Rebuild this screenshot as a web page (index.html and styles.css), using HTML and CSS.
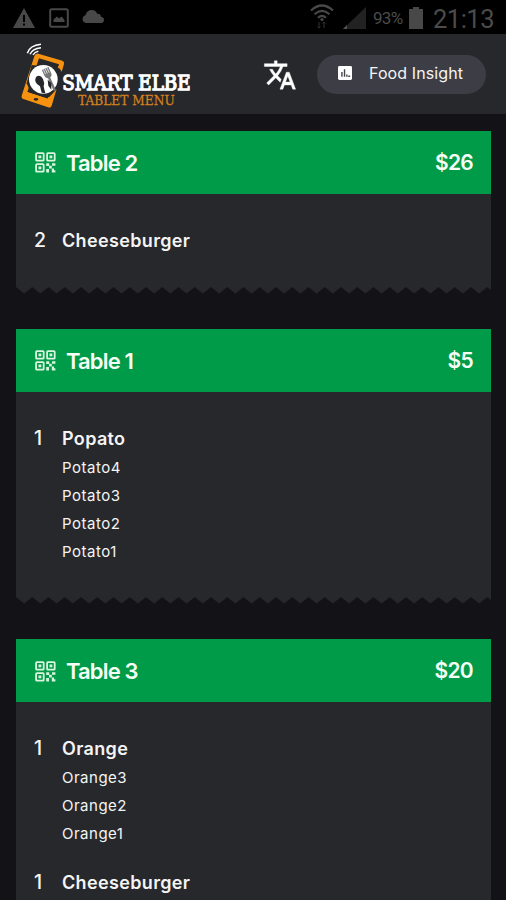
FILE: index.html
```html
<!DOCTYPE html>
<html lang="en">
<head>
<meta charset="utf-8">
<title>Smart Elbe Tablet Menu</title>
<link rel="stylesheet" href="styles.css">
</head>
<body>
<svg class="defs" width="0" height="0">
  <symbol id="qr" viewBox="0 0 21 21">
    <g fill="none" stroke="currentColor" stroke-width="1.8"><rect x="1.1" y="1.1" width="7.6" height="7.6" rx=".8"/><rect x="12.1" y="1.1" width="7.6" height="7.6" rx=".8"/><rect x="1.1" y="12.1" width="7.6" height="7.6" rx=".8"/></g>
    <path fill="currentColor" d="M3.500 3.500h2.800v2.800H3.500zM14.500 3.500h2.800v2.800h-2.800zM3.500 14.500h2.800v2.800H3.500zM11.200 11.200h3v2.600h2.600v2.800h-2.800v-2.600h-2.800zM17 11.200h3.400v2.600H17zM11.200 17h2.800v3.400h-2.800zM16.800 16.400h2.200v1.800h1.400v2.200h-3.600z"/>
  </symbol>
</svg>
<div class="status">
  <div class="status-left">
    <svg width="22" height="20" viewBox="0 0 22 20"><path fill="#484848" fill-rule="evenodd" d="M11 0 22 20H0zM10 7v7h2V7zm0 8.500v2h2v-2z"/></svg>
    <svg width="20" height="20" viewBox="0 0 20 20"><rect x="1.200" y="1.200" width="17.600" height="17.600" rx="1.500" fill="none" stroke="#484848" stroke-width="2"/><path fill="#484848" d="M4.500 14v-2.500L8 8.500l2 2 2.500-2 3 3.500v2z"/></svg>
    <svg width="22" height="13" viewBox="0 0 22 13"><path fill="#484848" d="M4 13a4 4 0 0 1-.5-7.800C4.500 1.500 7 0 9.500 0c3 0 5 1.500 5.700 3.800C18 3.500 19 5.500 19 6.700c2 .3 3 1.600 3 3.200C22 12 20.500 13 19 13z"/></svg>
  </div>
  <div class="status-right">
    <svg width="24" height="25" viewBox="0 0 24 25"><g fill="none" stroke="#484848" stroke-width="2.200"><path d="M1 6.500Q12-3.500 23 6.500M4.500 10.200Q12 3.500 19.500 10.200M8 13.700Q12 10 16 13.700"/></g><circle cx="12" cy="15.500" r="1.600" fill="#484848"/><path d="M9 18v6M7.500 22.500 9 24l1.500-1.500M14 24v-6m-1.500 1.500L14 18l1.500 1.500" fill="none" stroke="#333"/></svg>
    <svg class="signal" width="23" height="22" viewBox="0 0 23 22"><path d="M23 0v22H0z" fill="#222"/><path d="M4 18v4H0z" fill="#555"/></svg>
    <span class="percent">93%</span>
    <svg class="battery" width="14" height="22" viewBox="0 0 14 22"><path d="M4 0h6v2h4v20H0V2h4z" fill="#484848"/></svg>
    <span class="clock">21:13</span>
  </div>
</div>
<header class="appbar">
  <svg class="logo" width="174" height="68" viewBox="60 126 522 204">
    <path fill="#f6920f" fill-rule="evenodd" d="M115 161 187 182Q194 185 192 192L155 317Q152 325 144 322L70 297Q63 294 65 287L103 169Q107 159 115 161zM117 175 177 193 143 296 82 276z"/>
    <path d="m77 275 69 22-5 15-69-23z" fill="#f6920f"/>
    <ellipse cx="108" cy="298" rx="7" ry="4" fill="#27282c"/>
    <path d="M95 195 80 250 93 278 147 292 176 262 190 222 178 205z" fill="#27282c"/>
    <circle cx="130" cy="238" r="43" fill="#fff"/>
    <g transform="rotate(-24 130 240)"><path d="M138 211h22v19q0 9-8 11v42h-7v-42q-7-2-7-11z" fill="#777"/><path d="M143 211v16M149 211v16M155 211v16" stroke="#fff" stroke-width="2"/></g>
    <path d="M108 231q12-10 21 6 6 12 2 23l5 20-11-2-5-19q-20-11-12-28z" fill="#26272a"/>
    <path d="m143 239 11 10 0 20-9-12z" fill="#26272a"/>
    <path d="M82 160q7-24 41-27M90 163q7-17 33-20M99 165q5-9 16-11" fill="none" stroke="#fff" stroke-width="4.500"/>
    <text class="logo-name" x="187" y="271" textLength="385" lengthAdjust="spacingAndGlyphs">SMART ELBE</text>
    <text class="logo-sub" x="234" y="314" textLength="290" lengthAdjust="spacingAndGlyphs">TABLET MENU</text>
  </svg>
  <svg class="translate" width="34" height="34" viewBox="0 0 24 24"><path fill="#fff" d="M12.870 15.070l-2.540-2.510.030-.030A17.520 17.520 0 0 0 14.070 6H17V4h-7V2H8v2H1v1.990h11.170C11.500 7.920 10.440 9.750 9 11.350 8.070 10.320 7.300 9.190 6.690 8h-2c.730 1.630 1.730 3.170 2.980 4.560l-5.090 5.020L4 19l5-5 3.110 3.110.760-2.040zM18.500 10h-2L12 22h2l1.120-3h4.750L21 22h2l-4.500-12zm-2.620 7l1.620-4.330L19.120 17h-3.240z" stroke="#fff" stroke-width=".3"/></svg>
  <div class="insight">
    <svg width="14" height="14" viewBox="0 0 15 15"><rect width="15" height="15" rx="1.500" fill="#fff"/><path d="M4.200 11.500v-5M7 11.500v-8M9.500 11.500V9M11 11h2" stroke="#44454c" stroke-width="1.500"/></svg>
    <span>Food Insight</span>
  </div>
</header>
<main>
  <section class="ticket">
    <div class="head"><svg class="qr"><use href="#qr"/></svg><h2>Table 2</h2><b class="price">$26</b></div>
    <div class="body">
      <div class="item"><span class="qty">2</span><div><h3>Cheeseburger</h3></div></div>
    </div>
    <svg class="zigzag" width="475" height="7"><defs><pattern id="teeth" width="16.250" height="7" patternUnits="userSpaceOnUse"><path d="M0 0h16.250L8.125 6.500z" fill="#27282c"/></pattern></defs><rect width="475" height="7" fill="url(#teeth)"/></svg>
  </section>
  <section class="ticket">
    <div class="head"><svg class="qr"><use href="#qr"/></svg><h2>Table 1</h2><b class="price">$5</b></div>
    <div class="body">
      <div class="item"><span class="qty">1</span><div><h3>Popato</h3><p>Potato4</p><p>Potato3</p><p>Potato2</p><p>Potato1</p></div></div>
    </div>
    <svg class="zigzag" width="475" height="7"><rect width="475" height="7" fill="url(#teeth)"/></svg>
  </section>
  <section class="ticket">
    <div class="head"><svg class="qr"><use href="#qr"/></svg><h2>Table 3</h2><b class="price">$20</b></div>
    <div class="body">
      <div class="item"><span class="qty">1</span><div><h3>Orange</h3><p>Orange3</p><p>Orange2</p><p>Orange1</p></div></div>
      <div class="item"><span class="qty">1</span><div><h3>Cheeseburger</h3></div></div>
    </div>
  </section>
</main>
</body>
</html>
```
FILE: styles.css
```css
* { box-sizing: border-box; }
html, body { height: 900px; overflow: hidden; }
body { margin: 0; background: #131217; color: #f4f4f4; font-family: Inter, "Liberation Sans", sans-serif; }
h2, h3, p { margin: 0; }
svg { display: block; flex: none; }
.defs { position: absolute; }
.status { height: 34px; background: #000; display: flex; justify-content: space-between; padding: 0 11px 0 13px; color: #4b4b4b; font-family: Roboto, sans-serif; }
.status-left { display: flex; gap: 14px; padding-top: 8px; }
.status-left svg:last-child { margin: 2px 0 0 -1px; }
.status-right { display: flex; padding-top: 4px; }
.status-right svg:first-child { margin-left: -2px; }
.signal { margin: 3px 0 0 9px; }
.percent { font-size: 17px; line-height: 28px; letter-spacing: -.7px; width: 34px; margin-left: 7px; }
.battery { margin: 3px 0 0 2px; }
.clock { font-size: 25.500px; line-height: 30px; margin-left: 10px; width: 62px; letter-spacing: -.5px; }
.appbar { height: 80px; background: #27282c; display: flex; align-items: flex-start; padding: 8px 20px; }
.logo { overflow: visible; }
.logo-name { font: 62px "DejaVu Serif", serif; fill: #fff; stroke: #fff; stroke-width: 4px; }
.logo-sub { font: 40px "DejaVu Serif", serif; fill: #d3801f; stroke: #d3801f; stroke-width: .8px; }
.translate { margin: 16px 2px 0 69px; }
.insight { width: 169px; height: 39px; margin: 13px 0 0 18px; border-radius: 20px; background: #3d3e45; display: flex; align-items: center; padding: 0 0 3px 21px; gap: 17px; font-size: 16px; letter-spacing: .1px; white-space: nowrap; }
main { padding: 16.500px 15px 0 16px; display: flex; flex-direction: column; gap: 34.500px; }
.ticket { width: 475px; }
.head { height: 63.500px; background: #009b48; display: flex; align-items: center; padding: 1px 18px 0 19px; color: #f5fff5; }
.qr { width: 21px; height: 21px; margin-right: 10px; color: #d9f5de; }
h2 { font-size: 22px; font-weight: 600; line-height: 30px; letter-spacing: -.85px; flex: 1; }
.price { font-size: 21px; font-weight: 600; line-height: 30px; letter-spacing: -.7px; }
.body { background: #27282c; padding: 33px 18px 33px; display: flex; flex-direction: column; gap: 22px; }
.item { display: flex; }
.qty { width: 28px; font-size: 19.500px; line-height: 27px; font-weight: 450; }
h3 { font-size: 18px; font-weight: 600; line-height: 27px; letter-spacing: .35px; }
p { font-size: 15px; line-height: 28.100px; letter-spacing: .5px; }
h3 + p { margin-top: 1.500px; }
p:last-child { margin-bottom: -1.500px; }
```
